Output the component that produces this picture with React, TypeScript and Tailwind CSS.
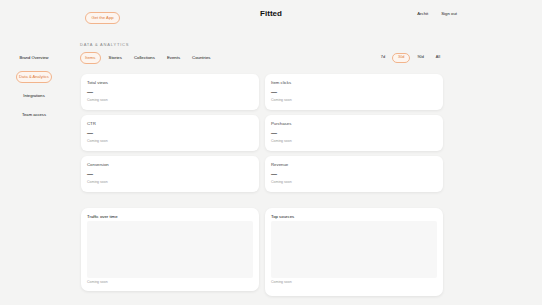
import React from "react";

const font = { fontFamily: '"Liberation Sans", Arial, sans-serif' };

function StatCard({ label }: { label: string }) {
  return (
    <div className="h-[36px] rounded-[6px] bg-white px-[6px] pt-[6px] shadow-[0_1px_3px_rgba(0,0,0,0.07)]">
      <div className="text-[4.3px] leading-[5px] text-[#444]">{label}</div>
      <div className="mt-[4px] text-[6px] font-bold leading-[6px] text-[#222]">—</div>
      <div className="mt-[3px] text-[3.5px] leading-[4px] text-[#999]">Coming soon</div>
    </div>
  );
}

function ChartCard({ title, tall }: { title: string; tall?: boolean }) {
  return (
    <div
      className={
        "rounded-[7px] bg-white px-[6px] pt-[6px] shadow-[0_1px_3px_rgba(0,0,0,0.08)] " +
        (tall ? "pb-[12px]" : "pb-[7px]")
      }
    >
      <div className="text-[4.3px] leading-[5px] text-[#111]">{title}</div>
      <div className="mt-[2px] h-[57px] rounded-[2px] bg-[#f7f7f7]" />
      <div className="mt-[2px] text-[3.5px] leading-[4px] text-[#999]">Coming soon</div>
    </div>
  );
}

export default function App() {
  const tabs = ["Items", "Stories", "Collections", "Events", "Countries"];
  const ranges = ["7d", "30d", "90d", "All"];
  return (
    <div className="min-h-[305px] w-[542px] bg-[#f4f4f3]" style={font}>
      <header className="mx-auto grid h-[28px] w-[372px] grid-cols-3 items-center">
        <div>
          <span className="inline-flex h-[12px] w-[35px] items-center justify-center rounded-full border border-[#f2b48c] bg-[#fdf5ef] text-[4.2px] text-[#e07b3a]">
            Get the App
          </span>
        </div>
        <div className="text-center text-[8px] font-bold leading-[10px] text-[#111]">Fitted</div>
        <div className="flex items-center justify-end gap-[13px] text-[4.3px] text-[#222]">
          <span>Archit</span>
          <span>Sign out</span>
        </div>
      </header>
      <div className="flex">
        <aside className="flex w-[68px] flex-col items-center gap-[7px] pt-[24px]">
          <div className="flex h-[12px] items-center text-[4.1px] text-[#111]">Brand Overview</div>
          <div className="flex h-[12px] items-center rounded-full border border-[#f2b48c] bg-[#fdf5ef] px-[2px] text-[4.1px] text-[#e07b3a]">
            Data &amp; Analytics
          </div>
          <div className="flex h-[12px] items-center text-[4.1px] text-[#111]">Integrations</div>
          <div className="flex h-[12px] items-center text-[4.1px] text-[#111]">Team access</div>
        </aside>
        <main className="ml-[12px] w-[365px] pt-[14px]">
          <div className="text-[4px] leading-[6px] tracking-[0.2em] text-[#888]">DATA &amp; ANALYTICS</div>
          <div className="mt-[4px] flex h-[12px] items-center justify-between">
            <div className="flex items-center gap-[4px]">
              {tabs.map((t, i) => (
                <span
                  key={t}
                  className={
                    "flex h-[12px] items-center rounded-full px-[4px] text-[4.3px] " +
                    (i === 0
                      ? "border border-[#f2b48c] bg-[#fdf5ef] text-[#e07b3a]"
                      : "text-[#111]")
                  }
                >
                  {t}
                </span>
              ))}
            </div>
            <div className="flex items-center gap-[2px]">
              {ranges.map((r, i) => (
                <span
                  key={r}
                  className={
                    "flex h-[10px] items-center rounded-full px-[5px] text-[3.8px] " +
                    (i === 1
                      ? "border border-[#f2b48c] bg-[#fdf5ef] text-[#e07b3a]"
                      : "text-[#222]")
                  }
                >
                  {r}
                </span>
              ))}
            </div>
          </div>
          <div className="mt-[10px] grid grid-cols-2 gap-x-[6px] gap-y-[5px] pl-[1px] pr-[2px]">
            <StatCard label="Total views" />
            <StatCard label="Item clicks" />
            <StatCard label="CTR" />
            <StatCard label="Purchases" />
            <StatCard label="Conversion" />
            <StatCard label="Revenue" />
          </div>
          <div className="mt-[16px] grid grid-cols-2 items-start gap-x-[6px] pl-[1px] pr-[2px]">
            <ChartCard title="Traffic over time" />
            <ChartCard title="Top sources" tall />
          </div>
        </main>
      </div>
    </div>
  );
}
